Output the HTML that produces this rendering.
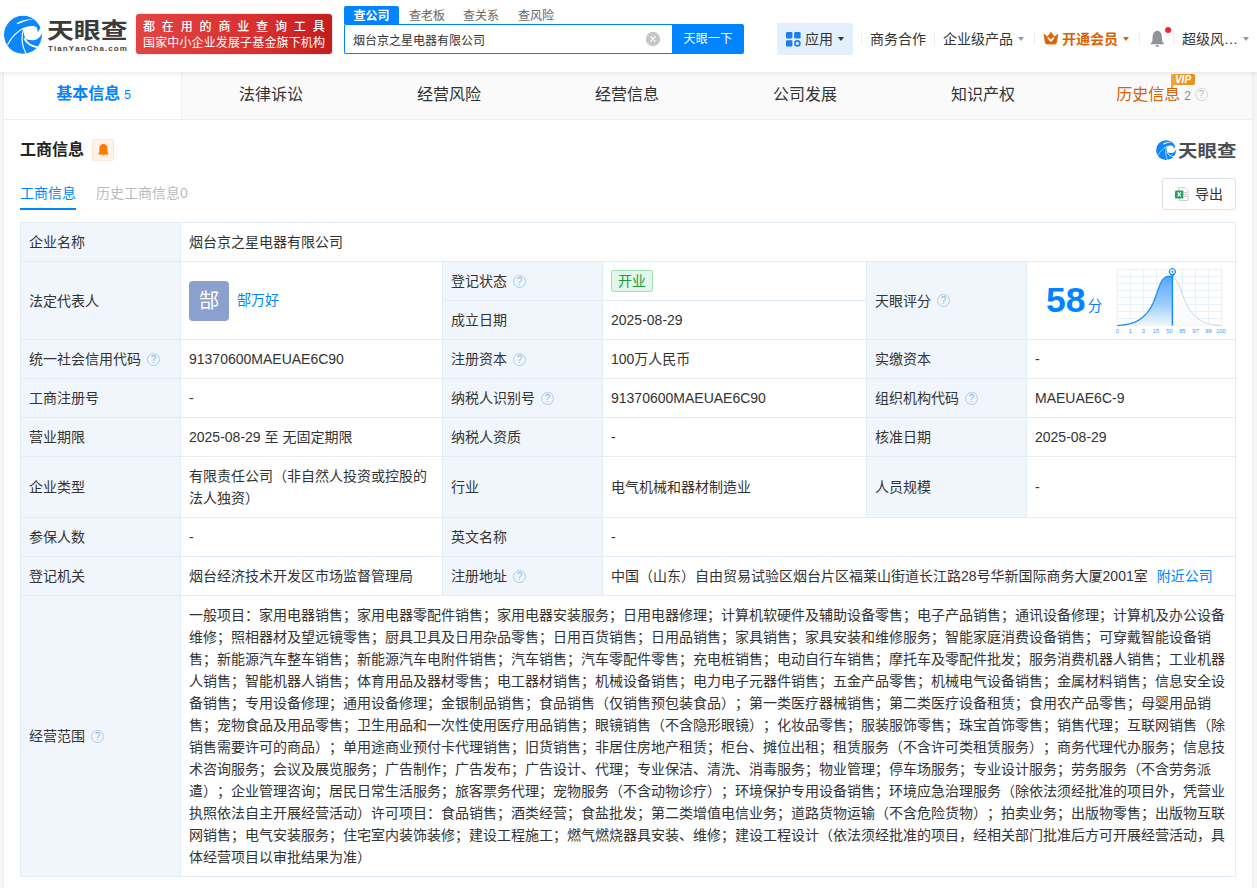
<!DOCTYPE html>
<html lang="zh-CN">
<head>
<meta charset="utf-8">
<title>烟台京之星电器有限公司 - 天眼查</title>
<style>
*{box-sizing:border-box;margin:0;padding:0}
html,body{width:1257px;height:888px;overflow:hidden;background:#f5f5f5}
body{font-family:"Liberation Sans","Noto Sans CJK SC",sans-serif;font-size:14px;color:#333;position:relative;text-spacing-trim:space-all;font-kerning:none}
a{text-decoration:none;color:#0084ff}
.abs{position:absolute}
/* header */
#hd{position:absolute;left:0;top:0;width:1257px;height:72px;background:#fff;box-shadow:0 1px 5px rgba(0,0,0,.10);z-index:5}
#logo-txt{position:absolute;left:47px;top:11px;font-size:22px;line-height:34px;font-weight:700;color:#3e3a39;letter-spacing:0;white-space:nowrap;font-family:"Noto Sans CJK SC",sans-serif;transform:scaleX(1.22);transform-origin:0 0}
#logo-sub{position:absolute;left:48px;top:43px;font-size:8px;line-height:11px;font-weight:bold;color:#4a4645;letter-spacing:1.08px;white-space:nowrap;font-family:"Liberation Sans",sans-serif}
#banner{position:absolute;left:136px;top:14px;width:196px;height:40px;border-radius:3px;background:linear-gradient(90deg,#e24444 0%,#d93030 60%,#c41d1d 100%);color:#fff;font-size:12px;line-height:15px;padding:6px 0 0 7px;white-space:nowrap;box-shadow:0 0 2px rgba(120,0,0,.35)}
#banner .l1{letter-spacing:6.85px;font-weight:500;display:block;height:15px}
#banner .l2{letter-spacing:.14px;display:block;height:15px;margin-top:1px}
#stabs{position:absolute;left:344px;top:6px;height:18px;font-size:12px;line-height:18px;color:#666;white-space:nowrap}
#stabs span{display:inline-block;height:18px;vertical-align:top;line-height:20px}
#stabs .on{background:#0084ff;color:#fff;width:55px;text-align:center;font-weight:bold;border-radius:2px 2px 0 0}
#sinput{position:absolute;left:344px;top:24px;width:329px;height:30px;border:1px solid #0084ff;border-right:none;border-radius:2px 0 0 2px;background:#fff;font-size:12px;line-height:32px;padding-left:8px;color:#333;white-space:nowrap}
#sbtn{position:absolute;left:672px;top:24px;width:72px;height:30px;background:#0084ff;color:#fff;font-size:12px;letter-spacing:.3px;line-height:30px;text-align:center;border-radius:0 2px 2px 0}
#app{position:absolute;left:777px;top:23px;width:76px;height:32px;background:#e2effc;border-radius:2px;font-size:14px;line-height:32px;color:#333;white-space:nowrap}
.nav{position:absolute;top:29px;height:20px;line-height:20px;font-size:14px;color:#333;white-space:nowrap}
.caret{display:inline-block;width:0;height:0;border-left:3.5px solid transparent;border-right:3.5px solid transparent;border-top:4px solid #999;vertical-align:middle;margin-left:5px;position:relative;top:-1px}
.vsep{position:absolute;top:33px;width:1px;height:12px;background:#e9ecf1}
/* tab bar */
#wrap{position:absolute;left:3px;top:72px;width:1250px;height:830px;background:#fff;border-left:1px solid #ededed;border-right:1px solid #ededed}
#tabs{position:absolute;left:0;top:0;width:1248px;height:48px;background:#fafafa;border-bottom:1px solid #efefef}
.tab{position:absolute;top:0;height:47px;line-height:45px;font-size:16px;color:#333;text-align:center;white-space:nowrap}
.tab.on{background:#fff;color:#0084ff;font-weight:bold;border-right:1px solid #f0f0f0;line-height:44px}
.tab small{font-size:12px;font-weight:normal;margin-left:4px}
.q{display:inline-block;width:13px;height:13px;border:1px solid #a9cdef;border-radius:50%;font-size:10px;line-height:11px;text-align:center;color:#86b6e4;vertical-align:middle;position:relative;top:-1px;margin-left:6px;font-family:"Liberation Sans",sans-serif}
/* section */
#title{position:absolute;left:20px;top:138px;font-size:16px;line-height:24px;font-weight:bold;color:#222;white-space:nowrap}
#bell{position:absolute;left:92px;top:139px;width:22px;height:22px;background:#fff3e8;border:1px solid #ffe6d1;border-radius:2px}
#subtabs{position:absolute;left:20px;top:182px;font-size:14px;line-height:22px;white-space:nowrap}
#subtabs .on{color:#0084ff;display:inline-block;width:56px}
#subtabs .off{color:#bbb;margin-left:20px}
#uline{position:absolute;left:20px;top:208px;width:56px;height:2px;background:#0084ff}
#export{position:absolute;left:1162px;top:178px;width:74px;height:32px;border:1px solid #d9dee8;border-radius:3px;font-size:14px;line-height:30px;color:#333;white-space:nowrap;background:#fff}
/* table */
#tb{position:absolute;left:20px;top:222px;width:1215px;border-collapse:collapse;table-layout:fixed;font-size:14px;line-height:22px;color:#333}
#tb td{border:1px solid #e2ecf5;padding:8px 8px 8px 8px;vertical-align:middle;background:#fff;white-space:nowrap;overflow:hidden}
#tb td.k{background:#f0f6fc}
.tag{display:inline-block;height:22px;line-height:20px;padding:0 6px;border:1px solid #a3e0b8;background:#e1f7e9;color:#1a9a45;border-radius:2px;font-size:14px;vertical-align:top}
.avatar{display:inline-block;width:40px;height:40px;border-radius:4px;background:#8aa0cf;color:#fff;font-size:20px;line-height:40px;text-align:center;vertical-align:middle;margin-right:8px;font-weight:400}
</style>
</head>
<body>
<div id="hd">
  <svg class="abs" style="left:0;top:8px" width="60" height="54" viewBox="0 0 987 888">
    <circle cx="378" cy="441" r="312" fill="#0d87ff"/>
  <path d="M400,326 C455,296 545,280 603,316 C615,342 619,368 620,396 C640,380 653,356 658,330 L760,300 L760,440 L689,413 C676,470 610,545 522,530 C480,524 450,520 428,514 C396,478 382,410 400,326 Z" fill="#fff"/>
  <path d="M270,250 C350,200 452,178 556,184 C462,198 382,222 296,264 Z" fill="#fff"/>
  <path d="M124,604 C188,480 288,380 404,326" fill="none" stroke="#fff" stroke-width="19"/>
  <path d="M394,332 C348,450 350,600 428,756" fill="none" stroke="#fff" stroke-width="19"/>
  <path d="M400,500 C440,585 520,630 622,646" fill="none" stroke="#fff" stroke-width="30"/>
  </svg>
  <div id="logo-txt">天眼查</div>
  <div id="logo-sub">TianYanCha.com</div>
  <div id="banner"><span class="l1">都在用的商业查询工具</span><span class="l2">国家中小企业发展子基金旗下机构</span></div>
  <div id="stabs"><span class="on">查公司</span><span style="margin-left:10px">查老板</span><span style="margin-left:18px">查关系</span><span style="margin-left:19px">查风险</span></div>
  <div id="sinput">烟台京之星电器有限公司</div>
  <svg class="abs" style="left:645px;top:30.6px" width="16" height="16" viewBox="0 0 16 16"><circle cx="8" cy="8" r="7.2" fill="#c6c6c9"/><path d="M5.7 5.7 L10.3 10.3 M10.3 5.7 L5.7 10.3" stroke="#fff" stroke-width="1.2" stroke-linecap="round"/></svg>
  <div id="sbtn">天眼一下</div>
  <div id="app">
    <svg class="abs" style="left:9px;top:9px" width="15" height="15" viewBox="0 0 15 15"><rect x="0" y="0" width="6.4" height="6.4" rx="1.2" fill="#1a7df0"/><rect x="8.2" y="0" width="6.4" height="6.4" rx="1.2" fill="#1a7df0"/><rect x="0" y="8.2" width="6.4" height="6.4" rx="1.2" fill="#1a7df0"/><circle cx="11.4" cy="11.4" r="2.5" fill="none" stroke="#1a7df0" stroke-width="1.6"/></svg>
    <span class="abs" style="left:28px;top:0">应用</span><span class="abs" style="left:61px;top:14px;width:0;height:0;border-left:3.5px solid transparent;border-right:3.5px solid transparent;border-top:4px solid #333"></span>
  </div>
  <div class="vsep" style="left:861px"></div>
  <div class="nav" style="left:870px">商务合作</div>
  <div class="vsep" style="left:934px"></div>
  <div class="nav" style="left:943px">企业级产品<span class="caret"></span></div>
  <div class="vsep" style="left:1034px"></div>
  <svg class="abs" style="left:1043px;top:31px" width="16" height="15" viewBox="0 0 16 15"><path d="M1 3.4 L4.6 5.9 L7.9 1.2 L11.2 5.9 L14.8 3.4 L13.5 11.4 Q13.3 13 11.7 13 L4.1 13 Q2.5 13 2.3 11.4 Z" fill="#d9640a" stroke="#d9640a" stroke-width=".8" stroke-linejoin="round"/><path d="M5.3 7.2 L7.9 9.9 L10.5 7.2" fill="none" stroke="#fff" stroke-width="1.7" stroke-linecap="round" stroke-linejoin="round"/></svg>
  <div class="nav" style="left:1062px;color:#d6620a;font-weight:bold">开通会员<span class="caret" style="border-top-color:#d6620a"></span></div>
  <div class="vsep" style="left:1139px"></div>
  <svg class="abs" style="left:1148px;top:24px" width="26" height="26" viewBox="0 0 26 26"><path d="M9.3 6.8 C5.6 7.3 4.6 10.6 4.6 13.4 L4.4 17.6 L2.7 19.6 L2.7 20.3 L15.9 20.3 L15.9 19.6 L14.2 17.6 L14 13.4 C14 10.6 13 7.3 9.3 6.8 Z" fill="#909398"/><rect x="7.4" y="21.2" width="3.8" height="1.5" rx=".75" fill="#909398"/><circle cx="20.1" cy="6.1" r="3" fill="#f5222d"/></svg>
  <div class="vsep" style="left:1173px"></div>
  <div class="nav" style="left:1182px">超级风…<span class="caret"></span></div>
</div>

<div id="wrap">
  <div id="tabs">
    <div class="tab on" style="left:0;width:178px;padding-left:2px">基本信息<small>5</small></div>
    <div class="tab" style="left:178px;width:178px">法律诉讼</div>
    <div class="tab" style="left:356px;width:178px">经营风险</div>
    <div class="tab" style="left:534px;width:178px">经营信息</div>
    <div class="tab" style="left:712px;width:178px">公司发展</div>
    <div class="tab" style="left:890px;width:178px">知识产权</div>
    <div class="tab" style="left:1068px;width:180px;color:#d8620a">历史信息<small style="color:#888">2</small><span class="q" style="border-color:#c9d6e2;color:#c0b8ae;margin-left:4px">?</span></div>
    <div class="abs" id="vip" style="left:1167px;top:2px;width:24px;height:11px;background:linear-gradient(90deg,#f0a53a,#e88f1c);border-radius:2px;color:#fff;font-size:10px;line-height:11px;font-weight:bold;font-style:italic;text-align:center;font-family:'Liberation Sans',sans-serif">VIP</div>
    <div class="abs" style="left:1167px;top:12px;width:0;height:0;border-top:4px solid #f0a53a;border-right:4px solid transparent"></div>
  </div>
</div>

<div id="title">工商信息</div>
<div id="bell"><svg class="abs" style="left:4px;top:3px" width="13" height="15" viewBox="0 0 13 15"><path d="M6.4 1 C3.4 1 2.4 3.6 2.4 5.8 L2.3 9 L1.2 10.8 L1.2 11.4 L11.6 11.4 L11.6 10.8 L10.5 9 L10.4 5.8 C10.4 3.6 9.4 1 6.4 1 Z" fill="#ff7a00"/><path d="M4.6 11.4 Q6.4 13.6 8.2 11.4 Z" fill="#ff7a00"/></svg></div>
<svg class="abs" style="left:1153.5px;top:136px" width="31.6" height="28.46" viewBox="0 0 987 888"><circle cx="378" cy="441" r="312" fill="#0d87ff"/>
  <path d="M400,326 C455,296 545,280 603,316 C615,342 619,368 620,396 C640,380 653,356 658,330 L760,300 L760,440 L689,413 C676,470 610,545 522,530 C480,524 450,520 428,514 C396,478 382,410 400,326 Z" fill="#fff"/>
  <path d="M270,250 C350,200 452,178 556,184 C462,198 382,222 296,264 Z" fill="#fff"/>
  <path d="M124,604 C188,480 288,380 404,326" fill="none" stroke="#fff" stroke-width="19"/>
  <path d="M394,332 C348,450 350,600 428,756" fill="none" stroke="#fff" stroke-width="19"/>
  <path d="M400,500 C440,585 520,630 622,646" fill="none" stroke="#fff" stroke-width="30"/></svg>
<div class="abs" style="left:1177.5px;top:136px;font-size:16.5px;line-height:28px;font-weight:700;color:#4a4d52;white-space:nowrap;font-family:'Noto Sans CJK SC',sans-serif;transform:scaleX(1.18);transform-origin:0 0">天眼查</div>

<div id="subtabs"><span class="on">工商信息</span><span class="off">历史工商信息0</span></div>
<div id="uline"></div>
<div id="export"><svg class="abs" style="left:12px;top:8px" width="14" height="14" viewBox="0 0 14 14"><path d="M4 .5 L10 .5 L13 3.5 L13 13.5 L4 13.5 Z" fill="#fff" stroke="#cfcfcf" stroke-width="1"/><rect x="0" y="3.4" width="8.4" height="8" rx="1" fill="#21a366"/><path d="M2.6 5.4 L5.8 9.4 M5.8 5.4 L2.6 9.4" stroke="#fff" stroke-width="1.2"/><path d="M9.6 5.5h2M9.6 7.5h2M9.6 9.5h2" stroke="#bdbdbd" stroke-width="1"/></svg><span class="abs" style="left:32px;top:0">导出</span></div>

<svg class="abs" style="left:1027px;top:262px;z-index:3" width="208" height="77" viewBox="0 0 208 77">
<defs><linearGradient id="sg" x1="0" y1="0" x2="0" y2="1"><stop offset="0" stop-color="#3d9bf5"/><stop offset=".12" stop-color="#55a9f7"/><stop offset=".55" stop-color="#8fc7fa"/><stop offset="1" stop-color="#f0f7fe"/></linearGradient></defs>
<path d="M90.28 7.28V63.57M103.32 7.28V63.57M116.36 7.28V63.57M129.41 7.28V63.57M142.45 7.28V63.57M155.49 7.28V63.57M168.53 7.28V63.57M181.58 7.28V63.57M194.62 7.28V63.57M90.28 7.28H194.62M90.28 14.32H194.62M90.28 21.35H194.62M90.28 28.39H194.62M90.28 35.43H194.62M90.28 42.46H194.62M90.28 49.50H194.62M90.28 56.54H194.62M90.28 63.57H194.62" fill="none" stroke="#e6f0fb" stroke-width="1"/>
<path d="M145.4,14.80 L145.9,15.03 L146.4,15.31 L146.9,15.65 L147.4,16.03 L147.9,16.44 L148.4,16.90 L148.9,17.38 L149.4,17.94 L149.9,18.67 L150.4,19.54 L150.9,20.51 L151.4,21.57 L151.9,22.68 L152.4,23.81 L152.9,25.04 L153.4,26.44 L153.9,27.92 L154.4,29.44 L154.9,30.92 L155.4,32.30 L155.9,33.63 L156.4,34.97 L156.9,36.29 L157.4,37.58 L157.9,38.83 L158.4,40.02 L158.9,41.14 L159.4,42.18 L159.9,43.18 L160.4,44.15 L160.9,45.07 L161.4,45.95 L161.9,46.79 L162.4,47.57 L162.9,48.30 L163.4,48.98 L163.9,49.62 L164.4,50.24 L164.9,50.83 L165.4,51.39 L165.9,51.94 L166.4,52.46 L166.9,52.95 L167.4,53.44 L167.9,53.90 L168.4,54.35 L168.9,54.79 L169.4,55.22 L169.9,55.65 L170.4,56.06 L170.9,56.47 L171.4,56.86 L171.9,57.24 L172.4,57.60 L172.9,57.94 L173.4,58.26 L173.9,58.57 L174.4,58.85 L174.9,59.11 L175.4,59.35 L175.9,59.59 L176.4,59.82 L176.9,60.04 L177.4,60.25 L177.9,60.45 L178.4,60.65 L178.9,60.83 L179.4,61.01 L179.9,61.17 L180.4,61.32 L180.9,61.47 L181.4,61.61 L181.9,61.73 L182.4,61.85 L182.9,61.97 L183.4,62.08 L183.9,62.19 L184.4,62.29 L184.9,62.39 L185.4,62.48 L185.9,62.57 L186.4,62.65 L186.9,62.73 L187.4,62.80 L187.9,62.87 L188.4,62.94 L188.9,63.01 L189.4,63.07 L189.9,63.13 L190.4,63.19 L190.9,63.25 L191.4,63.30 L191.9,63.35 L192.4,63.40 L192.9,63.45 L193.4,63.49 L193.9,63.53 L194.4,63.56 L194.6,63.57 L194.6,63.57 L145.4,63.57 Z" fill="#fbfbfc" fill-opacity=".9"/>
<path d="M145.4,14.80 L145.9,15.03 L146.4,15.31 L146.9,15.65 L147.4,16.03 L147.9,16.44 L148.4,16.90 L148.9,17.38 L149.4,17.94 L149.9,18.67 L150.4,19.54 L150.9,20.51 L151.4,21.57 L151.9,22.68 L152.4,23.81 L152.9,25.04 L153.4,26.44 L153.9,27.92 L154.4,29.44 L154.9,30.92 L155.4,32.30 L155.9,33.63 L156.4,34.97 L156.9,36.29 L157.4,37.58 L157.9,38.83 L158.4,40.02 L158.9,41.14 L159.4,42.18 L159.9,43.18 L160.4,44.15 L160.9,45.07 L161.4,45.95 L161.9,46.79 L162.4,47.57 L162.9,48.30 L163.4,48.98 L163.9,49.62 L164.4,50.24 L164.9,50.83 L165.4,51.39 L165.9,51.94 L166.4,52.46 L166.9,52.95 L167.4,53.44 L167.9,53.90 L168.4,54.35 L168.9,54.79 L169.4,55.22 L169.9,55.65 L170.4,56.06 L170.9,56.47 L171.4,56.86 L171.9,57.24 L172.4,57.60 L172.9,57.94 L173.4,58.26 L173.9,58.57 L174.4,58.85 L174.9,59.11 L175.4,59.35 L175.9,59.59 L176.4,59.82 L176.9,60.04 L177.4,60.25 L177.9,60.45 L178.4,60.65 L178.9,60.83 L179.4,61.01 L179.9,61.17 L180.4,61.32 L180.9,61.47 L181.4,61.61 L181.9,61.73 L182.4,61.85 L182.9,61.97 L183.4,62.08 L183.9,62.19 L184.4,62.29 L184.9,62.39 L185.4,62.48 L185.9,62.57 L186.4,62.65 L186.9,62.73 L187.4,62.80 L187.9,62.87 L188.4,62.94 L188.9,63.01 L189.4,63.07 L189.9,63.13 L190.4,63.19 L190.9,63.25 L191.4,63.30 L191.9,63.35 L192.4,63.40 L192.9,63.45 L193.4,63.49 L193.9,63.53 L194.4,63.56 L194.6,63.57" fill="none" stroke="#c9d3dd" stroke-width="1"/>
<path d="M90.3,63.57 L90.8,63.54 L91.3,63.51 L91.8,63.47 L92.3,63.42 L92.8,63.38 L93.3,63.32 L93.8,63.27 L94.3,63.22 L94.8,63.16 L95.3,63.10 L95.8,63.03 L96.3,62.97 L96.8,62.90 L97.3,62.83 L97.8,62.76 L98.3,62.68 L98.8,62.60 L99.3,62.51 L99.8,62.42 L100.3,62.33 L100.8,62.23 L101.3,62.13 L101.8,62.02 L102.3,61.90 L102.8,61.78 L103.3,61.66 L103.8,61.53 L104.3,61.39 L104.8,61.24 L105.3,61.08 L105.8,60.91 L106.3,60.73 L106.8,60.54 L107.3,60.34 L107.8,60.13 L108.3,59.91 L108.8,59.69 L109.3,59.45 L109.8,59.21 L110.3,58.96 L110.8,58.69 L111.3,58.39 L111.8,58.08 L112.3,57.74 L112.8,57.39 L113.3,57.02 L113.8,56.63 L114.3,56.23 L114.8,55.82 L115.3,55.40 L115.8,54.97 L116.3,54.54 L116.8,54.09 L117.3,53.63 L117.8,53.16 L118.3,52.67 L118.8,52.16 L119.3,51.62 L119.8,51.07 L120.3,50.49 L120.8,49.88 L121.3,49.25 L121.8,48.59 L122.3,47.88 L122.8,47.12 L123.3,46.31 L123.8,45.45 L124.3,44.54 L124.8,43.59 L125.3,42.60 L125.8,41.58 L126.3,40.50 L126.8,39.34 L127.3,38.11 L127.8,36.84 L128.3,35.53 L128.8,34.19 L129.3,32.85 L129.8,31.51 L130.3,30.07 L130.8,28.56 L131.3,27.05 L131.8,25.61 L132.3,24.30 L132.8,23.15 L133.3,22.03 L133.8,20.95 L134.3,19.93 L134.8,19.02 L135.3,18.23 L135.8,17.59 L136.3,17.10 L136.8,16.63 L137.3,16.20 L137.8,15.80 L138.3,15.45 L138.8,15.14 L139.3,14.89 L139.8,14.69 L140.3,14.56 L140.8,14.46 L141.3,14.37 L141.8,14.30 L142.3,14.27 L142.8,14.28 L143.3,14.32 L143.8,14.39 L144.3,14.49 L144.8,14.59 L145.3,14.75 L145.4,14.80 L145.4,63.57 L90.3,63.57 Z" fill="url(#sg)" fill-opacity=".9"/>
<path d="M90.3,63.57 L90.8,63.54 L91.3,63.51 L91.8,63.47 L92.3,63.42 L92.8,63.38 L93.3,63.32 L93.8,63.27 L94.3,63.22 L94.8,63.16 L95.3,63.10 L95.8,63.03 L96.3,62.97 L96.8,62.90 L97.3,62.83 L97.8,62.76 L98.3,62.68 L98.8,62.60 L99.3,62.51 L99.8,62.42 L100.3,62.33 L100.8,62.23 L101.3,62.13 L101.8,62.02 L102.3,61.90 L102.8,61.78 L103.3,61.66 L103.8,61.53 L104.3,61.39 L104.8,61.24 L105.3,61.08 L105.8,60.91 L106.3,60.73 L106.8,60.54 L107.3,60.34 L107.8,60.13 L108.3,59.91 L108.8,59.69 L109.3,59.45 L109.8,59.21 L110.3,58.96 L110.8,58.69 L111.3,58.39 L111.8,58.08 L112.3,57.74 L112.8,57.39 L113.3,57.02 L113.8,56.63 L114.3,56.23 L114.8,55.82 L115.3,55.40 L115.8,54.97 L116.3,54.54 L116.8,54.09 L117.3,53.63 L117.8,53.16 L118.3,52.67 L118.8,52.16 L119.3,51.62 L119.8,51.07 L120.3,50.49 L120.8,49.88 L121.3,49.25 L121.8,48.59 L122.3,47.88 L122.8,47.12 L123.3,46.31 L123.8,45.45 L124.3,44.54 L124.8,43.59 L125.3,42.60 L125.8,41.58 L126.3,40.50 L126.8,39.34 L127.3,38.11 L127.8,36.84 L128.3,35.53 L128.8,34.19 L129.3,32.85 L129.8,31.51 L130.3,30.07 L130.8,28.56 L131.3,27.05 L131.8,25.61 L132.3,24.30 L132.8,23.15 L133.3,22.03 L133.8,20.95 L134.3,19.93 L134.8,19.02 L135.3,18.23 L135.8,17.59 L136.3,17.10 L136.8,16.63 L137.3,16.20 L137.8,15.80 L138.3,15.45 L138.8,15.14 L139.3,14.89 L139.8,14.69 L140.3,14.56 L140.8,14.46 L141.3,14.37 L141.8,14.30 L142.3,14.27 L142.8,14.28 L143.3,14.32 L143.8,14.39 L144.3,14.49 L144.8,14.59 L145.3,14.75 L145.4,14.80" fill="none" stroke="#1a8cff" stroke-width="1.3"/>
<path d="M145.4 13.80V63.57" stroke="#1a8cff" stroke-width="1.5"/>
<path d="M145.4 15.31 L142.71 12.01 A3.5 3.5 0 1 1 148.11 12.01 Z" fill="#1a8cff"/>
<circle cx="145.4" cy="9.71" r="2.4" fill="#fff"/><circle cx="145.4" cy="9.71" r="1" fill="#1a8cff"/>
<g font-family="Liberation Sans, sans-serif" font-size="5.8" fill="#3f99f5"><text x="90.3" y="71.4" text-anchor="middle">0</text><text x="103.3" y="71.4" text-anchor="middle">1</text><text x="116.4" y="71.4" text-anchor="middle">3</text><text x="128.9" y="71.4" text-anchor="middle">15</text><text x="142.4" y="71.4" text-anchor="middle">50</text><text x="155.5" y="71.4" text-anchor="middle">85</text><text x="168.5" y="71.4" text-anchor="middle">97</text><text x="181.6" y="71.4" text-anchor="middle">99</text><text x="193.8" y="71.4" text-anchor="middle">100</text></g>
<text x="19" y="50.4" font-family="Liberation Sans, sans-serif" font-size="35.5" font-weight="bold" fill="#0084ff">58</text>
<text x="60.8" y="49.4" font-family="Liberation Sans, Noto Sans CJK SC, sans-serif" font-size="14.5" fill="#0084ff">分</text>
</svg>
<table id="tb">
<colgroup><col style="width:160px"><col style="width:262px"><col style="width:160px"><col style="width:264px"><col style="width:160px"><col style="width:209px"></colgroup>
<tr style="height:39px"><td class="k">企业名称</td><td colspan="5">烟台京之星电器有限公司</td></tr>
<tr style="height:39px"><td class="k" rowspan="2">法定代表人</td><td rowspan="2" style="padding-top:0;padding-bottom:0"><span class="avatar">郜</span><a>郜万好</a></td><td class="k">登记状态<span class="q">?</span></td><td><span class="tag">开业</span></td><td class="k" rowspan="2">天眼评分<span class="q">?</span></td><td rowspan="2" id="score" style="padding:0;position:relative"></td></tr>
<tr style="height:39px"><td class="k">成立日期</td><td>2025-08-29</td></tr>
<tr style="height:39px"><td class="k">统一社会信用代码<span class="q">?</span></td><td>91370600MAEUAE6C90</td><td class="k">注册资本<span class="q">?</span></td><td>100万人民币</td><td class="k">实缴资本</td><td>-</td></tr>
<tr style="height:39px"><td class="k">工商注册号</td><td>-</td><td class="k">纳税人识别号<span class="q">?</span></td><td>91370600MAEUAE6C90</td><td class="k">组织机构代码<span class="q">?</span></td><td>MAEUAE6C-9</td></tr>
<tr style="height:39px"><td class="k">营业期限</td><td>2025-08-29 至 无固定期限</td><td class="k">纳税人资质</td><td>-</td><td class="k">核准日期</td><td>2025-08-29</td></tr>
<tr style="height:61px"><td class="k">企业类型</td><td>有限责任公司（非自然人投资或控股的<br>法人独资）</td><td class="k">行业</td><td>电气机械和器材制造业</td><td class="k">人员规模</td><td>-</td></tr>
<tr style="height:39px"><td class="k">参保人数</td><td>-</td><td class="k">英文名称</td><td colspan="3">-</td></tr>
<tr style="height:39px"><td class="k">登记机关</td><td>烟台经济技术开发区市场监督管理局</td><td class="k">注册地址<span class="q">?</span></td><td colspan="3">中国（山东）自由贸易试验区烟台片区福莱山街道长江路28号华新国际商务大厦2001室<a style="margin-left:9px">附近公司</a></td></tr>
<tr style="height:281px"><td class="k">经营范围<span class="q">?</span></td><td colspan="5" id="scope">一般项目：家用电器销售；家用电器零配件销售；家用电器安装服务；日用电器修理；计算机软硬件及辅助设备零售；电子产品销售；通讯设备修理；计算机及办公设备<br>维修；照相器材及望远镜零售；厨具卫具及日用杂品零售；日用百货销售；日用品销售；家具销售；家具安装和维修服务；智能家庭消费设备销售；可穿戴智能设备销<br>售；新能源汽车整车销售；新能源汽车电附件销售；汽车销售；汽车零配件零售；充电桩销售；电动自行车销售；摩托车及零配件批发；服务消费机器人销售；工业机器<br>人销售；智能机器人销售；体育用品及器材零售；电工器材销售；机械设备销售；电力电子元器件销售；五金产品零售；机械电气设备销售；金属材料销售；信息安全设<br>备销售；专用设备修理；通用设备修理；金银制品销售；食品销售（仅销售预包装食品）；第一类医疗器械销售；第二类医疗设备租赁；食用农产品零售；母婴用品销<br>售；宠物食品及用品零售；卫生用品和一次性使用医疗用品销售；眼镜销售（不含隐形眼镜）；化妆品零售；服装服饰零售；珠宝首饰零售；销售代理；互联网销售（除<br>销售需要许可的商品）；单用途商业预付卡代理销售；旧货销售；非居住房地产租赁；柜台、摊位出租；租赁服务（不含许可类租赁服务）；商务代理代办服务；信息技<br>术咨询服务；会议及展览服务；广告制作；广告发布；广告设计、代理；专业保洁、清洗、消毒服务；物业管理；停车场服务；专业设计服务；劳务服务（不含劳务派<br>遣）；企业管理咨询；居民日常生活服务；旅客票务代理；宠物服务（不含动物诊疗）；环境保护专用设备销售；环境应急治理服务（除依法须经批准的项目外，凭营业<br>执照依法自主开展经营活动）许可项目：食品销售；酒类经营；食盐批发；第二类增值电信业务；道路货物运输（不含危险货物）；拍卖业务；出版物零售；出版物互联<br>网销售；电气安装服务；住宅室内装饰装修；建设工程施工；燃气燃烧器具安装、维修；建设工程设计（依法须经批准的项目，经相关部门批准后方可开展经营活动，具<br>体经营项目以审批结果为准）</td></tr>
</table>
</body>
</html>
